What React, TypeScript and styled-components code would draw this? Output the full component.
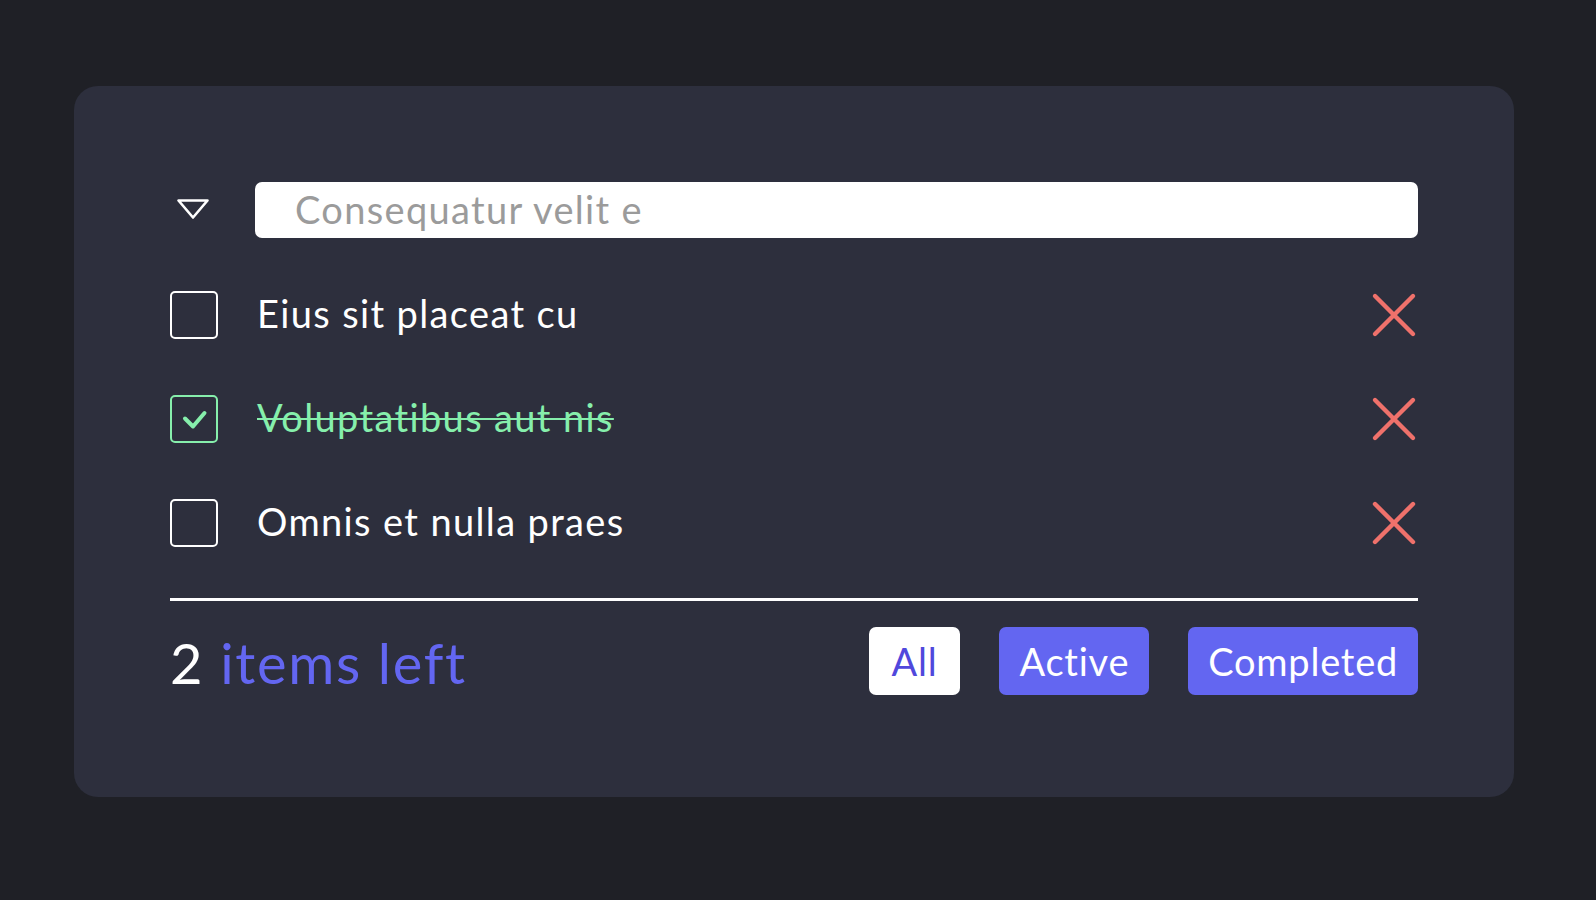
import { styled, createGlobalStyle } from 'styled-components';

const GlobalStyle = createGlobalStyle`
  * { box-sizing: border-box; }
  body {
    margin: 0;
    background-color: #1f2026;
    font-family: Lato, 'Noto Sans', sans-serif;
  }
`;

const todos = [
  { id: 1, title: 'Eius sit placeat cu', done: false },
  { id: 2, title: 'Voluptatibus aut nis', done: true },
  { id: 3, title: 'Omnis et nulla praes', done: false },
];

export default function App() {
  const left = todos.filter((t) => !t.done).length;
  return (
    <>
      <GlobalStyle />
      <Page>
        <Card>
          <Header>
            <ToggleAll aria-label="toggle all">
              <svg width="34" height="24" viewBox="0 0 34 24" fill="none">
                <path
                  d="M2.5 2.5 H31.5 L17 19.5 Z"
                  stroke="#fff"
                  strokeWidth="2.6"
                  strokeLinejoin="round"
                />
              </svg>
            </ToggleAll>
            <NewTodo placeholder="Consequatur velit e" />
          </Header>

          <List>
            {todos.map((todo) => (
              <Row key={todo.id}>
                <Check $done={todo.done}>
                  {todo.done && (
                    <svg width="43" height="43" viewBox="0 0 43 43" fill="none">
                      <path
                        d="M12 20.5 L20 28.5 L31.5 15"
                        stroke="#86efac"
                        strokeWidth="4"
                        strokeLinecap="round"
                        strokeLinejoin="round"
                      />
                    </svg>
                  )}
                </Check>
                <Title $done={todo.done}>{todo.title}</Title>
                <Remove aria-label="delete">
                  <svg width="48" height="48" viewBox="0 0 48 48" fill="none">
                    <path
                      d="M5 5 L43 43 M43 5 L5 43"
                      stroke="#ef716b"
                      strokeWidth="4.4"
                      strokeLinecap="round"
                    />
                  </svg>
                </Remove>
              </Row>
            ))}
          </List>

          <Divider />

          <Footer>
            <Counter>
              {left} <CounterLabel>items left</CounterLabel>
            </Counter>
            <Filters>
              <FilterButton $selected>All</FilterButton>
              <FilterButton>Active</FilterButton>
              <FilterButton>Completed</FilterButton>
            </Filters>
          </Footer>
        </Card>
      </Page>
    </>
  );
}

const Page = styled.div`
  min-height: 900px;
  padding: 86px 82px 0 74px;
`;

const Card = styled.section`
  width: 1440px;
  padding: 96px 96px 102px;
  border-radius: 24px;
  background-color: #2d2f3d;
`;

const Header = styled.div`
  display: flex;
  align-items: center;
  gap: 37px;
  height: 56px;
`;

const ToggleAll = styled.button`
  width: 48px;
  height: 56px;
  padding: 0 0 0 6px;
  border: none;
  background: none;
  display: flex;
  align-items: center;
  justify-content: flex-start;
`;

const NewTodo = styled.input`
  flex: 1;
  height: 56px;
  padding: 0 40px 2px;
  border: none;
  border-radius: 7px;
  background-color: #fff;
  font-family: inherit;
  font-size: 38px;
  letter-spacing: 0.035em;
  color: #333;
  outline: none;

  &::placeholder {
    color: #9b9b9b;
  }
`;

const List = styled.ul`
  list-style: none;
  margin: 53px 0 0;
  padding: 0;
  display: flex;
  flex-direction: column;
  gap: 56px;
`;

const Row = styled.li`
  display: flex;
  align-items: center;
  gap: 37px;
  height: 48px;
`;

const Check = styled.span<{ $done: boolean }>`
  flex: none;
  width: 48px;
  height: 48px;
  border: 2.5px solid ${({ $done }) => ($done ? '#86efac' : '#fff')};
  border-radius: 5px;
  display: flex;
  align-items: center;
  justify-content: center;
`;

const Title = styled.span<{ $done: boolean }>`
  flex: 1;
  padding: 0 0 4px 2px;
  font-size: 38px;
  line-height: 1;
  letter-spacing: 0.036em;
  color: ${({ $done }) => ($done ? '#86efac' : '#fff')};
  text-decoration: ${({ $done }) => ($done ? 'line-through' : 'none')};
  text-decoration-thickness: 1.5px;
`;

const Remove = styled.button`
  flex: none;
  width: 48px;
  height: 48px;
  padding: 0;
  border: none;
  background: none;
  display: flex;
`;

const Divider = styled.hr`
  margin: 51px 0 0;
  height: 3px;
  border: none;
  background-color: #fff;
`;

const Footer = styled.div`
  margin-top: 26px;
  display: flex;
  align-items: center;
  justify-content: space-between;
`;

const Counter = styled.div`
  padding-top: 4px;
  font-size: 56px;
  line-height: 1;
  letter-spacing: 0.03em;
  color: #fff;
`;

const CounterLabel = styled.span`
  color: #6366f1;
`;

const Filters = styled.div`
  display: flex;
  gap: 39px;
`;

const FilterButton = styled.button<{ $selected?: boolean }>`
  height: 68px;
  padding: 0 ${({ $selected }) => ($selected ? 23 : 20)}px;
  border: none;
  border-radius: 7px;
  font-family: inherit;
  font-size: 38px;
  letter-spacing: 0.02em;
  background-color: ${({ $selected }) => ($selected ? '#fff' : '#6366f1')};
  color: ${({ $selected }) => ($selected ? '#5048dc' : '#fff')};
`;
